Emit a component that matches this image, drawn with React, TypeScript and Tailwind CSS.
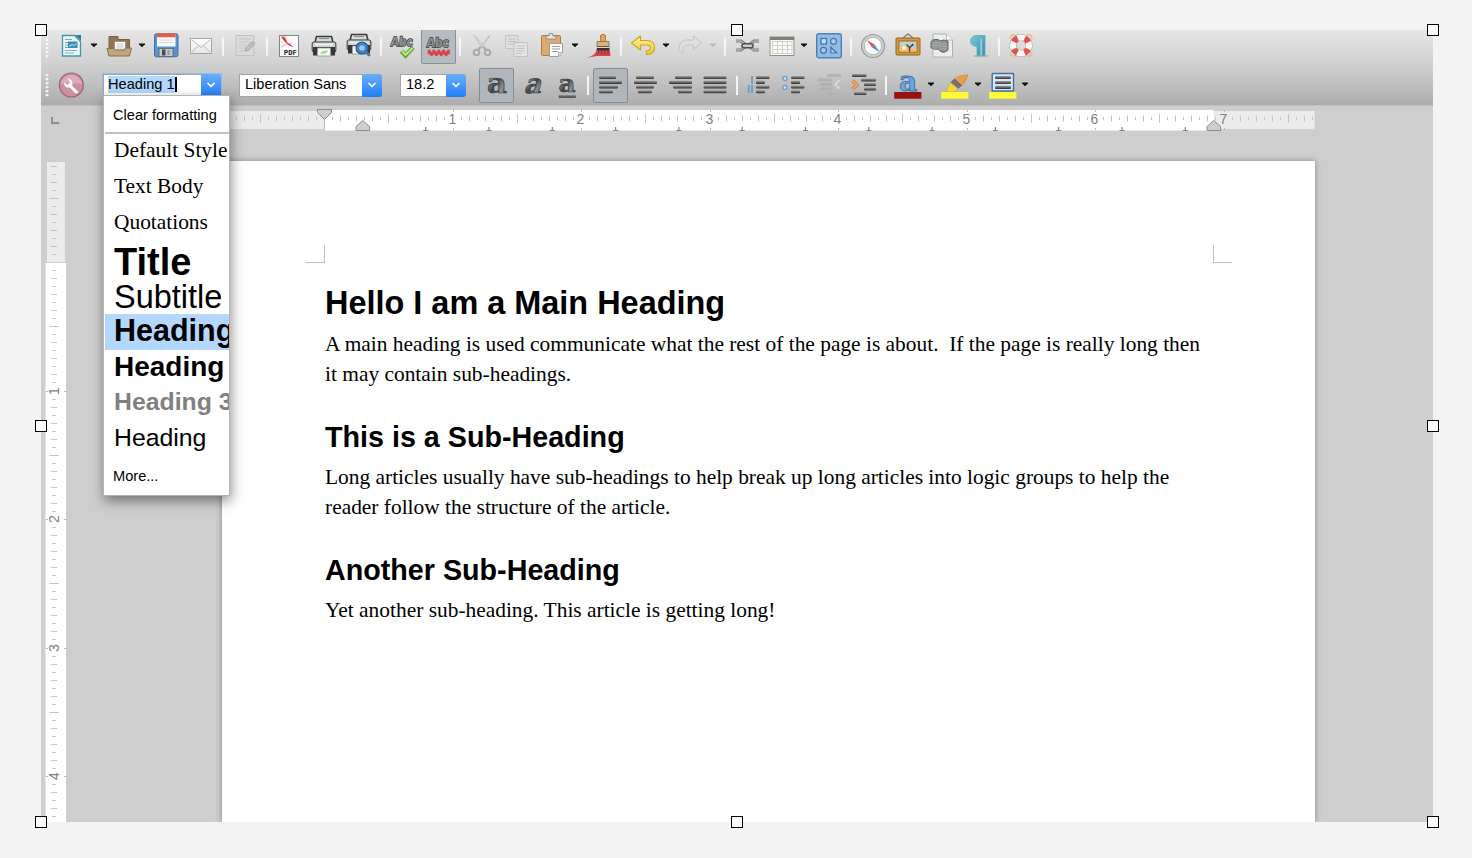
import type { ReactNode } from "react";

type IconProps = { children: ReactNode; className?: string };

const Icon = ({ children, className = "" }: IconProps) => (
  <svg viewBox="0 0 26 26" className={`h-[26px] w-[26px] shrink-0 overflow-visible ${className}`}>
    {children}
  </svg>
);

const Caret = ({ className = "", color = "#111" }: { className?: string; color?: string }) => (
  <svg viewBox="0 0 8 6" className={`h-[6px] w-[8px] shrink-0 -translate-y-px ${className}`}>
    <path d="M1 1.500h6v.8L4.300 5h-.6L1 2.300z" fill={color} />
  </svg>
);

const Sep = ({ className = "" }: { className?: string }) => (
  <div className={`h-[19px] w-[2px] shrink-0 bg-[#f4f4f4] ${className}`} />
);

const Grip = () => (
  <svg viewBox="0 0 4 26" className="ml-[4px] h-[26px] w-[4px] shrink-0">
    {[1, 5, 9, 13, 17, 21].map((y) => (
      <rect key={y} x="0.5" y={y + 1} width="3" height="2.2" rx="0.8" fill="#f4f4f4" />
    ))}
  </svg>
);

const Defs = () => (
  <svg className="absolute h-0 w-0">
    <defs>
      <linearGradient id="bar" x1="0" y1="0" x2="0" y2="1">
        <stop offset="0" stopColor="#a2a2a2" />
        <stop offset="0.4" stopColor="#747474" />
        <stop offset="1" stopColor="#2c2c2c" />
      </linearGradient>
      <linearGradient id="metal" x1="0" y1="0" x2="1" y2="0.9">
        <stop offset="0" stopColor="#3d4343" />
        <stop offset="0.3" stopColor="#8d9393" />
        <stop offset="0.5" stopColor="#3d4343" />
        <stop offset="0.75" stopColor="#8d9393" />
        <stop offset="1" stopColor="#303636" />
      </linearGradient>
      <linearGradient id="paper" x1="0" y1="0" x2="0" y2="1">
        <stop offset="0" stopColor="#ffffff" />
        <stop offset="1" stopColor="#e6e8e8" />
      </linearGradient>
      <linearGradient id="gold" x1="0" y1="0" x2="0" y2="1">
        <stop offset="0" stopColor="#fff2a0" />
        <stop offset="1" stopColor="#f0cb35" />
      </linearGradient>
      <linearGradient id="teal" x1="0" y1="0" x2="1" y2="1">
        <stop offset="0" stopColor="#7cc8d8" />
        <stop offset="1" stopColor="#3194ad" />
      </linearGradient>
    </defs>
  </svg>
);

const Bars = ({ rows, fill = "url(#bar)" }: { rows: number[][]; fill?: string }) => (
  <>
    {rows.map(([x, y, w], i) => (
      <rect key={i} x={x} y={y} width={w} height="3.1" rx="1" fill={fill} />
    ))}
  </>
);

const Printer = () => (
  <>
    <path d="M5.500 3.500h15l1.500 6H4z" fill="#d8dcdb" stroke="#3a3f3e" strokeWidth="1.600" />
    <path d="M8 5.500h10" stroke="#8a908f" strokeWidth="1.200" />
    <rect x="1.200" y="9" width="23.600" height="10" rx="2" fill="#cfd3d2" stroke="#4c5251" strokeWidth="1.200" />
    <path d="M4 11.500h18" stroke="#f1f3f2" strokeWidth="1.500" />
    <path d="M2 14h22v8.500h-4V16.500H6v6H2z" fill="#343938" />
    <rect x="6.500" y="15" width="13" height="8" fill="#f8faf8" stroke="#8b908e" strokeWidth=".8" />
    <path d="M9 20.500c2-3 5-3 8-3-1 3-4 4-8 3z" fill="#a5d98b" />
  </>
);

const Abc = ({ y }: { y: number }) => (
  <text x="12.5" y={y} textAnchor="middle" textLength="22" lengthAdjust="spacingAndGlyphs" fontFamily="DejaVu Sans, sans-serif" fontWeight="bold" fontSize="12.5" fill="#8b9090" stroke="#303434" strokeWidth="1.3" paintOrder="stroke" transform="skewX(-4)">
    Abc
  </text>
);

const MainToolbar = () => (
  <div className="flex h-8 items-center">
    <Grip />
    <Icon className="ml-[10px]">
      <path d="M3.500 2.500h12l6 6v14.500h-18z" fill="#eef6f9" stroke="#4893ac" strokeWidth="1.300" />
      <path d="M16 2h6v6z" fill="#2a80a0" />
      <path d="M6 6.500h7M6 9.500h3M6 12h3M6 14.500h3M6 17.500h12M6 20h9" stroke="#6db1ca" strokeWidth="1.200" />
      <rect x="9" y="8.500" width="9.500" height="6.500" fill="#3590b3" />
      <path d="M10 13.500l3-2 2 1 2.500-2" stroke="#d3edf5" fill="none" />
    </Icon>
    <Caret className="ml-[5px]" />
    <Icon className="ml-[8px]">
      <path d="M3 17V3.500h9v3h11.500V17z" fill="#8e7657" stroke="#75603f" />
      <path d="M8.500 8.500h11V17h-11z" fill="#fafafa" stroke="#8b8678" strokeWidth=".7" />
      <path d="M10.500 11h7M10.500 13h7M10.500 15h7" stroke="#bbb" strokeWidth=".8" />
      <path d="M1 15.500h7l1.500 1.500h8.500l1.500-2h6L23.500 23H3z" fill="#c0a680" stroke="#86704f" />
    </Icon>
    <Caret className="ml-[6px]" />
    <Icon className="ml-[7px]">
      <rect x="1.500" y=".8" width="23.500" height="23" rx="2" fill="#5a93d0" stroke="#3d72a8" />
      <rect x="4" y="1" width="18.500" height="12.500" fill="#fafafa" />
      <path d="M4 .5h18.500v3.800H4z" fill="#e65c49" />
      <path d="M6 7h14.500M6 9.500h14.500" stroke="#d0d0d0" strokeWidth=".8" />
      <rect x="6" y="15.500" width="14" height="8" fill="#c5c9ca" stroke="#596065" strokeWidth=".8" />
      <path d="M9 16.500h3.500v6H9z" fill="#43494c" />
      <path d="M14.500 17h2v5h-2z" fill="#959b9d" />
    </Icon>
    <Icon className="ml-[9px]">
      <rect x="2.500" y="5.500" width="21" height="15" fill="url(#paper)" stroke="#a1a5a4" />
      <path d="M4 7l9 7.500L22 7M4 19l6.500-6M22 19l-6.500-6" fill="none" stroke="#b5b9b8" strokeWidth="1" />
    </Icon>
    <Sep className="ml-[8px]" />
    <Icon className="ml-[8px]">
      <path d="M4 2.500h18v20H4z" fill="#dadada" stroke="#c1c1c1" />
      <path d="M7 6h12M7 9h12M7 12h8M7 15h6M7 18h5" stroke="#c6c6c6" />
      <path d="M13 18l1-3.500 6.500-6 2.500 2-6.500 7z" fill="#bdbdbd" stroke="#a5a5a5" strokeWidth=".8" />
    </Icon>
    <Sep className="ml-[8px]" />
    <Icon className="ml-[8px]">
      <rect x="3.500" y="2.500" width="19" height="21" fill="#fafafa" stroke="#858585" />
      <path d="M5 4c2-1 4 0 5 3l1.500 2.500L18 14c-4-1-6-2-8-4C8 8 7 6 5 4z" fill="#e02a34" />
      <path d="M5 4l4-.5 2 6M5 14q5-3.500 11-4" fill="none" stroke="#eb9297" strokeWidth=".8" />
      <text x="7.800" y="22" textLength="13" lengthAdjust="spacingAndGlyphs" fontFamily="DejaVu Sans Mono, monospace" fontWeight="bold" fontSize="7" fill="#222">PDF</text>
    </Icon>
    <Icon className="ml-[9px]"><Printer /></Icon>
    <Icon className="ml-[9px]">
      <g transform="translate(0 -2)"><Printer /></g>
      <circle cx="16" cy="15" r="6" fill="#3f83c5" stroke="#2d5b90" strokeWidth="1.200" />
      <circle cx="16" cy="15" r="2.800" fill="#a1c9ec" />
      <path d="M20.500 19.500l2.500 2.500" stroke="#4b77a8" strokeWidth="2.800" strokeLinecap="round" />
    </Icon>
    <Sep className="ml-[8px]" />
    <Icon className="ml-[8px]">
      <Abc y={13} />
      <path d="M11.500 18l4 4.500L23 14.500" fill="none" stroke="#5a9f2f" strokeWidth="4.400" />
      <path d="M12 18l3.500 4 7-7" fill="none" stroke="#b4ea78" strokeWidth="2.200" />
    </Icon>
    <div className="ml-[5px] h-[34px] w-[35px] shrink-0 self-start rounded-b-[2px] border border-t-0 border-[#8a919a] bg-[#b6bbc0] pl-1 pt-[3px]">
      <Icon>
        <Abc y={14.500} />
        <path d="M2 19q1.200-3 2.400 0t2.400 0 2.400 0 2.400 0 2.400 0 2.400 0 2.400 0 2.400 0 2.400 0M2 21q1.200-2.400 2.400 0t2.400 0 2.400 0 2.400 0 2.400 0 2.400 0 2.400 0 2.400 0 2.400 0" fill="none" stroke="#d8444b" strokeWidth="1.900" />
      </Icon>
    </div>
    <Sep className="ml-[3px]" />
    <Icon className="ml-[8px]">
      <path d="M5 2l8 13 1.500-2zM21 2l-8 13-1.500-2z" fill="#e4e4e4" stroke="#bcbcbc" strokeWidth=".9" />
      <path d="M11.500 14l-2.500 3M14.500 14l2.500 3" stroke="#aaa" strokeWidth="2" />
      <circle cx="7.500" cy="19.500" r="2.800" fill="none" stroke="#aaa" strokeWidth="2" />
      <circle cx="18.500" cy="19.500" r="2.800" fill="none" stroke="#aaa" strokeWidth="2" />
    </Icon>
    <Icon className="ml-[9px]">
      <path d="M1.500 2.500h12.500v13H1.500z" fill="#dedede" stroke="#c2c2c2" />
      <path d="M4 6h8M4 8.500h8M4 11h6" stroke="#c2c2c2" />
      <path d="M10 9.500h13.500v14H10z" fill="#e2e2e2" stroke="#c2c2c2" />
      <path d="M12.500 13h8M12.500 15.500h8M12.500 18h8M12.500 20.500h5" stroke="#c2c2c2" />
    </Icon>
    <Icon className="ml-[9px]">
      <rect x="2.500" y="2.500" width="19" height="20" rx="1" fill="#dda96c" stroke="#b47b37" />
      <path d="M7 3h3V.7h4V3h3v3H7z" fill="#e6e7e6" stroke="#8e9290" />
      <path d="M10.500 10.500h13v9l-4 4h-9z" fill="#fbfbfb" stroke="#9b9f9d" />
      <path d="M13 13.500h8M13 16h8M13 18.500h6" stroke="#989c9b" />
      <path d="M19.500 23.500v-4h4" fill="#ddd" stroke="#999" strokeWidth=".7" />
    </Icon>
    <Caret className="ml-[6px]" />
    <Icon className="ml-[8px]">
      <path d="M13.500 2.500q2.500-2.500 5 0l-.5 8h-4z" fill="#e4a660" stroke="#a87334" />
      <path d="M10 8.500h12v5H10z" fill="#dcae78" stroke="#8a6a40" strokeWidth=".8" />
      <path d="M10 13.500h12.500v5H9.500z" fill="#303333" />
      <path d="M10 14.500h12.500" stroke="#d5d5d5" />
      <path d="M9.500 17.500h13.500l.5 5.500H10L0 24.800Q8 22.500 9.500 17.500z" fill="#dd434a" />
      <path d="M12 18l-1.500 4M15 18l-1 4M18 18v4M21 18v4" stroke="#7d2b30" strokeWidth=".8" />
    </Icon>
    <Sep className="ml-[7px]" />
    <Icon className="ml-[8px]">
      <path d="M1.500 10l9-7v4.500h6c5 0 8 2.500 8 7s-3 7-8 7v-3.500c3 0 4-1.200 4-3.200s-1.500-2.800-4-2.800h-6V17z" fill="url(#gold)" stroke="#cda617" strokeWidth="1.100" strokeLinejoin="round" />
    </Icon>
    <Caret className="ml-[6px]" />
    <Icon className="ml-[7px]">
      <path d="M24.500 9.500l-8-6.500v4h-6c-5 0-8 3-8 7s1 5 3.500 6v-3.500c0-3 2-4.500 4.500-4.500h6v4z" fill="#dfdfdf" stroke="#c2c2c2" strokeLinejoin="round" />
    </Icon>
    <Caret className="ml-[6px]" color="#b9b9b9" />
    <Sep className="ml-[7px]" />
    <Icon className="ml-[8px]">
      <path d="M2 8h5l5 4M2 17h5l5-4M25 8h-5l-5 4M25 17h-5l-5-4" fill="none" stroke="#777c7b" strokeWidth="3" />
      <path d="M2 8h5l5 4M2 17h5l5-4M25 8h-5l-5 4M25 17h-5l-5-4" fill="none" stroke="#d0d3d2" strokeWidth="1" />
      <rect x="8" y="10.700" width="11" height="4" rx="2" fill="#c8cbca" stroke="#4d5352" strokeWidth="1.500" />
    </Icon>
    <Icon className="ml-[9px]">
      <rect x="1" y="4" width="24" height="18.500" fill="#fafaf6" stroke="#8a8f89" />
      <path d="M1 4h24v3H1z" fill="#7b807a" />
      <path d="M3 8.500h20M3 12.500h20M3 16.500h20M3 20.500h20M3.500 8v13M8.500 8v13M13.500 8v13M18.500 8v13M23 8v13" stroke="#cfd2c9" />
    </Icon>
    <Caret className="ml-[5px]" />
    <Icon className="ml-[8px]">
      <rect x=".7" y=".7" width="24.600" height="24" rx="2" fill="#94bbe1" stroke="#4882bd" strokeWidth="1.400" />
      <rect x="5" y="5.500" width="5.500" height="5.500" fill="#c5ddf2" stroke="#3c79b6" strokeWidth="1.300" />
      <circle cx="17.500" cy="8.300" r="3" fill="#a9c9e8" stroke="#3c79b6" strokeWidth="1.200" />
      <circle cx="7.500" cy="17.300" r="3" fill="#a9c9e8" stroke="#3c79b6" strokeWidth="1.200" />
      <path d="M14.800 14v6h6z" fill="#a9c9e8" stroke="#3c79b6" strokeWidth="1.200" />
    </Icon>
    <Sep className="ml-[8px]" />
    <Icon className="ml-[8px]">
      <circle cx="13" cy="13" r="11.500" fill="#cfd1d1" stroke="#989c9b" strokeWidth="1.200" />
      <circle cx="13" cy="13" r="8.700" fill="#fafafa" stroke="#b0b4b3" />
      <path d="M7 7l7.500 4.500-2.500 3z" fill="#df4f55" />
      <path d="M19.500 19l-7.500-4.500 2.500-3z" fill="#5788c8" />
    </Icon>
    <Icon className="ml-[9px]">
      <path d="M8 5l5-4 5 4" fill="none" stroke="#808080" strokeWidth="1.400" />
      <rect x="1" y="5" width="24" height="17" rx="1" fill="#d29a3c" stroke="#97641b" />
      <rect x="4" y="8" width="18" height="11" fill="#b9d2db" stroke="#93560d" strokeWidth=".8" />
      <path d="M4.500 14q4-3 9 0t8 0v4.500h-17z" fill="#f0c070" />
      <circle cx="9" cy="15" r="2" fill="#fff4bd" />
      <path d="M14.500 18.500v-4l-3-3M14.500 15l3.500-4M17 12l1.500.5" fill="none" stroke="#564125" strokeWidth="1.400" />
    </Icon>
    <Icon className="ml-[8px]">
      <path d="M4 1h13.500l6 6v17H4z" fill="#ececec" stroke="#b0b0b0" />
      <path d="M17.500 1v6h6" fill="#fafafa" stroke="#b5b5b5" />
      <path d="M2 9q1-3 5-2.500 3-.5 4 1.500 4-2 8 0v9q-4 4-8 1-1-1-1-2-4 1-8-1z" fill="#8e9392" stroke="#626867" />
      <path d="M11 8v9M3 10h6.500M12.500 11h5.500M3 12.500h6.500M12.500 13.500h5.500M3 15h6.500M12.500 16h5.500" stroke="#b0b5b3" strokeWidth=".8" />
    </Icon>
    <Icon className="ml-[11px]">
      <ellipse cx="15" cy="23" rx="8" ry="1.300" fill="#888" opacity=".4" />
      <path d="M19 2.500H11C2.500 2.500 2.500 13.500 11 13.500v9h3.200V5h1.800v17.500H19z" fill="url(#teal)" stroke="#5aaabd" strokeWidth=".8" />
    </Icon>
    <Sep className="ml-[6px]" />
    <Icon className="ml-[8px]">
      <circle cx="13" cy="12.500" r="8" fill="none" stroke="#a8a09c" strokeWidth="7" />
      <circle cx="13" cy="12.500" r="8" fill="none" stroke="#f6f6f4" strokeWidth="6" />
      <circle cx="13" cy="12.500" r="8" fill="none" stroke="#e2514e" strokeWidth="6" strokeDasharray="5.200 7.366" strokeDashoffset="-3.683" />
      <path d="M2 6q0-4.500 5-4.500M19 1.500q5 0 5 4.500M24 19q0 4.500-5 4.500M7 23.500q-5 0-5-4.500" fill="none" stroke="#edbd86" strokeWidth="1.500" />
    </Icon>
  </div>
);

const ComboButton = () => (
  <div className="flex w-5 shrink-0 items-center justify-center rounded-r-[3px] bg-linear-to-b from-[#69aef8] to-[#1c7ef8]">
    <svg viewBox="0 0 10 6" className="h-[6px] w-[10px]">
      <path d="M1.500 1L5 4.400 8.500 1" fill="none" stroke="#fff" strokeWidth="1.600" />
    </svg>
  </div>
);

const Combo = ({ className, children }: { className: string; children: ReactNode }) => (
  <div className={`flex h-[23px] shrink-0 ${className}`}>
    <div className="flex flex-1 items-center whitespace-nowrap border border-r-0 border-[#a5a5a5] bg-white pb-px pl-[5px] font-['Liberation_Sans',sans-serif] text-[14.600px] leading-none text-black">
      {children}
    </div>
    <ComboButton />
  </div>
);

const Glyph = ({ y = 21, size = 28, wide = 1.1, italic = false }: { y?: number; size?: number; wide?: number; italic?: boolean }) => (
  <g transform={`translate(13 ${y}) ${italic ? "skewX(-16)" : ""} scale(${wide} 1)`}>
    <text textAnchor="middle" fontFamily="DejaVu Serif, serif" fontWeight="bold" fontSize={size} fill="url(#metal)" stroke="#323838" strokeWidth=".7">
      a
    </text>
  </g>
);

const FormatToolbar = () => (
  <div className="mt-[6px] flex h-[34px] items-center">
    <Grip />
    <Icon className="ml-[9px]">
      <circle cx="13.300" cy="13" r="12" fill="#cc8f9c" stroke="#95667a" strokeWidth="1.200" />
      <path d="M2.500 12a11 11 0 0 1 21.600 0q-10-2-21.600 0z" fill="#dcadb8" />
      <path d="M9.500 6.500l2.500 3-1 2.500-2.500.5-2-2.500c-1 3.500 1.500 6.200 5.300 5.500l5.200 5.500q2.500 1.200 3.200-1.200l-6-5.800c1.200-4.500-1.200-7.200-4.700-7.500z" fill="#fff" />
    </Icon>
    <Combo className="ml-[19px] w-[118px] outline outline-1 outline-[#8dbced]">
      <span className="-ml-px bg-[#b3d7fe] py-px">Heading 1</span>
      <span className="h-[15px] w-[2px] bg-black" />
    </Combo>
    <Combo className="ml-[18px] w-[143px]">Liberation Sans</Combo>
    <Combo className="ml-[18px] w-[66px]">18.2</Combo>
    <div className="ml-[13px] h-[35px] w-[35px] shrink-0 self-start rounded-[2px] border border-[#858c96] bg-[#b0b6bc] pl-1 pt-[3px]">
      <Icon><Glyph /></Icon>
    </div>
    <Icon className="ml-[5px]"><Glyph italic wide={0.98} size={27} /></Icon>
    <Icon className="ml-[9px]">
      <Glyph y={20} size={25} wide={1.05} />
      <rect x="4.500" y="22.800" width="17.500" height="3" rx="1" fill="url(#bar)" />
    </Icon>
    <Sep className="ml-[7px]" />
    <div className="ml-[4px] h-[35px] w-[35px] shrink-0 self-start rounded-[2px] border border-[#858c96] bg-[#b0b6bc] pl-1 pt-[3px]">
      <Icon><Bars rows={[[1, 4, 17], [1, 8.8, 23], [1, 13.500, 19], [1, 18.200, 14]]} /></Icon>
    </div>
    <Icon className="ml-[4px]"><Bars rows={[[4, 4, 18], [2, 8.800, 23], [4, 13.500, 18], [6, 18.200, 14]]} /></Icon>
    <Icon className="ml-[9px]"><Bars rows={[[8, 4, 17], [2, 8.800, 23], [6, 13.500, 19], [11, 18.200, 14]]} /></Icon>
    <Icon className="ml-[9px]"><Bars rows={[[1.500, 4, 23], [1.500, 8.800, 23], [1.500, 13.500, 23], [1.500, 18.200, 23]]} /></Icon>
    <Sep className="ml-[8px]" />
    <Icon className="ml-[8px]">
      <path d="M6 4v8M6 13v8M2.700 13v8" stroke="#6ba1d0" strokeWidth="2" />
      <Bars rows={[[10, 4, 13.500], [10, 8.800, 9], [10, 13.500, 13.500], [10, 18.200, 9]]} />
    </Icon>
    <Icon className="ml-[9px]">
      <circle cx="4" cy="6.500" r="2" fill="#d4e4f0" stroke="#6ba1d0" strokeWidth="1.400" />
      <circle cx="4" cy="15.500" r="2" fill="#d4e4f0" stroke="#6ba1d0" strokeWidth="1.400" />
      <Bars rows={[[10, 4, 13.500], [10, 8.800, 9], [10, 13.500, 13.500], [10, 18.200, 9]]} />
    </Icon>
    <Icon className="ml-[9px]">
      <Bars fill="#b2b2b2" rows={[[11, 2, 14], [1, 6.500, 15], [4, 11, 12], [4, 15.500, 12], [11, 20, 14]]} />
      <path d="M23.500 8.500l-4.500 4 4.500 4" fill="none" stroke="#dadada" strokeWidth="1.800" />
    </Icon>
    <Icon className="ml-[9px]">
      <Bars rows={[[1, 2, 14.500], [10, 6.500, 15], [13, 11, 12], [13, 15.500, 12], [3, 20, 12.500]]} />
      <path d="M1.500 8.500l4.500 4.300-4.500 4.500" fill="none" stroke="#d8813d" strokeWidth="3.400" />
      <path d="M1.500 8.500l4.500 4.300-4.500 4.500" fill="none" stroke="#f5a766" strokeWidth="1.600" />
    </Icon>
    <Sep className="ml-[8px]" />
    <Icon className="ml-[8px]">
      <text x="13" y="18.500" textAnchor="middle" fontFamily="DejaVu Serif, serif" fontSize="28" fontWeight="bold" fill="#6ba6df" stroke="#3a73b0" strokeWidth=".9">a</text>
      <rect x="-.8" y="20" width="27.200" height="6.700" fill="#941310" />
    </Icon>
    <Caret className="ml-[6px]" />
    <Icon className="ml-[7px]">
      <path d="M26 3Q17 3 12.500 7l7 7Q24 10 26 3z" fill="#ea9b4b" stroke="#c98040" strokeWidth=".6" />
      <path d="M12.500 7l7 6.500-3.500 3-7.500-6z" fill="#707475" stroke="#505456" strokeWidth=".6" />
      <path d="M8.500 10.500l7.500 6L12 20H4z" fill="#f5d445" stroke="#cfa930" strokeWidth=".6" />
      <rect x="-.8" y="20" width="27.200" height="6.700" fill="#fff935" />
    </Icon>
    <Caret className="ml-[6px]" />
    <Icon className="ml-[8px]">
      <rect x="2.200" y="1.500" width="21.300" height="17.500" rx=".5" fill="#dae7f2" stroke="#4270a8" strokeWidth="1.400" />
      <Bars rows={[[5, 4, 16], [5, 9, 16], [5, 13.800, 16]]} />
      <rect x="-.8" y="20" width="27.200" height="6.700" fill="#fff935" />
    </Icon>
    <Caret className="ml-[5px]" />
  </div>
);

const STEP = 128.5 / 16;

function ticks(from: number, to: number) {
  const list: { p: number; i: number; len: number }[] = [];
  for (let i = from; i <= to; i++) {
    if (i === 0) continue;
    const len = i % 16 === 0 ? 0 : i % 8 === 0 ? 9 : i % 2 === 0 ? 6 : 3.5;
    list.push({ p: Math.round(i * STEP), i, len });
  }
  return list;
}

const HorizontalRuler = () => (
  <svg viewBox="222 106 1094 30" className="ml-[181px] h-[30px] w-[1094px] shrink-0">
    <rect x="222" y="111" width="1093" height="18" fill="#ebebeb" />
    <path d="M1314.500 111v19" stroke="#dedede" />
    <rect x="324.500" y="110" width="889" height="20.500" fill="#fff" />
    {ticks(-12, 123).map(({ p, i, len }) =>
      len ? (
        <path key={i} d={`M${324.5 + p} ${118.5 - len / 2}v${len}`} stroke="#c4c4c4" />
      ) : (
        <g key={i}>
          <path d={`M${324.5 + p} 110v2M${324.5 + p} 128v2`} stroke="#bbb" />
          <text x={324.5 + p - 1} y="123.500" textAnchor="middle" fontFamily="Liberation Sans, sans-serif" fontSize="14" fill="#808080">
            {i / 16}
          </text>
        </g>
      ),
    )}
    {Array.from({ length: 13 }, (_, i) => (
      <path key={i} d={`M${425.7 + i * 63.3} 127v4m-2.500 -.500h5`} stroke="#858585" strokeWidth="1.200" />
    ))}
    <path d="M324.500 119v11" stroke="#bbb" />
    <path d="M317.500 109.500h14v3l-7 7-7-7z" fill="#cecece" stroke="#8d8d8d" />
    <path d="M356 130.500v-4l6.800-6 6.800 6v4z" fill="#cecece" stroke="#8d8d8d" />
    <path d="M1207 130.500v-4l6.800-6 6.800 6v4z" fill="#cecece" stroke="#8d8d8d" />
  </svg>
);

const VerticalRuler = () => (
  <svg viewBox="41 161 30 661" className="h-[661px] w-[30px] shrink-0">
    <rect x="47" y="162" width="18" height="100" fill="#ebebeb" />
    <rect x="45.500" y="263" width="20.500" height="559" fill="#fff" />
    {ticks(-12, 69).map(({ p, i, len }) =>
      len ? (
        <path key={i} d={`M${54 - len / 2} ${262.500 + p}h${len}`} stroke="#c4c4c4" />
      ) : (
        <g key={i}>
          <path d={`M46 ${262.500 + p}h2M64 ${262.500 + p}h2`} stroke="#bbb" />
          <text transform={`translate(59 ${262 + p}) rotate(-90)`} textAnchor="middle" fontFamily="Liberation Sans, sans-serif" fontSize="14" fill="#808080">
            {i / 16}
          </text>
        </g>
      ),
    )}
  </svg>
);

const Document = () => (
  <main className="relative ml-[151px] h-[661px] w-[1093px] shrink-0 bg-white pl-[103px] pt-[122px] font-['Liberation_Serif',serif] text-[21.420px] leading-[29.500px] text-black shadow-[0_0_6px_0_rgba(0,0,0,0.35)]">
    <div className="absolute left-[84px] top-[84px] h-[18px] w-[19px] border-b border-r border-[#bebebe]" />
    <div className="absolute left-[991px] top-[84px] h-[18px] w-[19px] border-b border-l border-[#bebebe]" />
    <h1 className="h-[47px] whitespace-nowrap font-['Liberation_Sans',sans-serif] text-[32.450px] font-bold leading-[40px]">Hello I am a Main Heading</h1>
    <p className="whitespace-pre">{"A main heading is used communicate what the rest of the page is about.  If the page is really long then\nit may contain sub-headings."}</p>
    <h2 className="mt-[28px] h-[46px] whitespace-nowrap font-['Liberation_Sans',sans-serif] text-[28.700px] font-bold leading-[40px]">This is a Sub-Heading</h2>
    <p className="whitespace-pre">{"Long articles usually have sub-headings to help break up long articles into logic groups to help the\nreader follow the structure of the article."}</p>
    <h2 className="mt-[28px] h-[46px] whitespace-nowrap font-['Liberation_Sans',sans-serif] text-[28.700px] font-bold leading-[40px]">Another Sub-Heading</h2>
    <p className="whitespace-pre">Yet another sub-heading. This article is getting long!</p>
  </main>
);

const StyleMenu = () => (
  <div className="absolute left-[62px] top-[65px] h-[401px] w-[127px] overflow-hidden whitespace-nowrap border border-[#b3b3b3] bg-white font-['Liberation_Sans',sans-serif] text-black shadow-[1px_5px_12px_rgba(0,0,0,0.45)]">
    <div className="flex h-[36px] items-center pb-px pl-[9px] pt-[4px] text-[14.600px]">Clear formatting</div>
    <div className="ml-px h-[2px] bg-[#c1c1c1]" />
    <div className="flex h-[35px] items-center pb-[2px] pl-[10px] font-['Liberation_Serif',serif] text-[21.400px]">Default Style</div>
    <div className="flex h-9 items-center pb-[2px] pl-[10px] font-['Liberation_Serif',serif] text-[21.400px]">Text Body</div>
    <div className="flex h-9 items-center pb-[2px] pl-[10px] font-['Liberation_Serif',serif] text-[21.400px]">Quotations</div>
    <div className="flex h-[37px] items-center pl-[10px] pt-[5px] text-[38px] font-bold leading-none">Title</div>
    <div className="flex h-[36px] items-center pl-[10px] pt-[3px] text-[32.500px] leading-none">Subtitle</div>
    <div className="ml-px flex h-9 items-center bg-[#b3d7ff] pb-[4px] pl-[9px] text-[30.500px] font-bold leading-none">Heading</div>
    <div className="flex h-9 items-center pb-[3px] pl-[10px] text-[28px] font-bold leading-none">Heading</div>
    <div className="flex h-9 items-center pb-[4px] pl-[10px] text-[24.800px] font-bold leading-none text-[#808080]">Heading 3</div>
    <div className="flex h-9 items-center pb-[4px] pl-[10px] text-[24.800px] leading-none">Heading</div>
    <div className="flex h-9 items-center pl-[9px] pt-px text-[14.600px]">More...</div>
  </div>
);

const Handle = ({ className }: { className: string }) => (
  <div className={`absolute h-3 w-3 border border-black bg-white ${className}`} />
);

export default function App() {
  return (
    <div className="h-[858px] w-[1472px] overflow-hidden bg-[#f3f3f3] pl-[41px] pt-[30px]">
      <Defs />
      <div className="relative h-[792px] w-[1392px]">
        <div className="flex h-full flex-col overflow-hidden bg-[#cecece]">
          <header className="h-[75px] shrink-0 bg-linear-to-b from-[#e6e6e6] via-[#cecece] to-[#adadad]">
            <MainToolbar />
            <FormatToolbar />
          </header>
          <div className="relative flex h-[56px] shrink-0 border-t border-[#bfbfbf]">
            <svg viewBox="0 0 10 10" className="absolute left-[9px] top-[10px] h-[10px] w-[10px]">
              <path d="M2 1v6h7" fill="none" stroke="#8e8e8e" strokeWidth="2" />
            </svg>
            <HorizontalRuler />
          </div>
          <div className="flex">
            <VerticalRuler />
            <Document />
          </div>
        </div>
        <StyleMenu />
        <Handle className="-left-1.5 -top-1.5" />
        <Handle className="left-[690px] -top-1.5" />
        <Handle className="-right-1.5 -top-1.5" />
        <Handle className="-left-1.5 top-[390px]" />
        <Handle className="-right-1.5 top-[390px]" />
        <Handle className="-left-1.5 -bottom-1.5" />
        <Handle className="left-[690px] -bottom-1.5" />
        <Handle className="-right-1.5 -bottom-1.5" />
      </div>
    </div>
  );
}
